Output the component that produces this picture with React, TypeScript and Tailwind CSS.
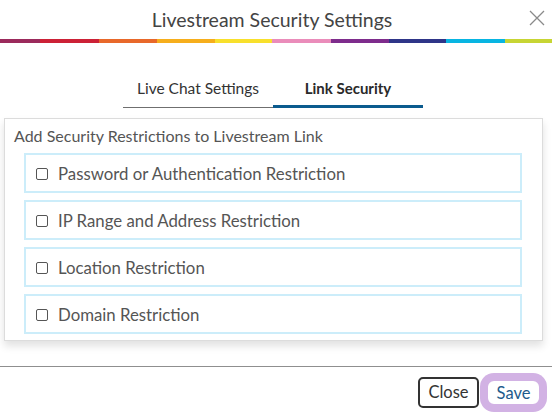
import React from "react";

const segs: [string, number][] = [
  ["#9b2a5c", 40],
  ["#cc2136", 59],
  ["#e8682a", 58],
  ["#f6ae1c", 58],
  ["#f8e02c", 57],
  ["#ea8cba", 59],
  ["#7e2c8c", 58],
  ["#2e3588", 57],
  ["#08b5e2", 59],
  ["#c7d534", 47],
];

const rows = [
  "Password or Authentication Restriction",
  "IP Range and Address Restriction",
  "Location Restriction",
  "Domain Restriction",
];

export default function App() {
  return (
    <div className="w-[552px] h-[412px] bg-white flex flex-col overflow-hidden" style={{ fontFamily: "Lato, 'Noto Sans', sans-serif" }}>
      <div className="relative h-[39px] flex items-center justify-center">
        <div className="text-[19.5px] text-[#444] leading-none pr-[8px]">Livestream Security Settings</div>
        <svg className="absolute left-[529px] top-[10px]" width="16" height="16" viewBox="0 0 16 16">
          <path d="M1 1 L15 15 M15 1 L1 15" stroke="#8a8a8a" strokeWidth="1.3" fill="none" />
        </svg>
      </div>
      <div className="flex h-[4px]">
        {segs.map(([c, w], i) => (
          <div key={i} className="h-full" style={{ background: c, width: w }} />
        ))}
      </div>
      <div className="flex mt-[27px] pl-[123px]">
        <div className="w-[150px] h-[38px] flex items-center justify-center border-b border-[#6f6f6f] text-[15.5px] text-[#333]">
          Live Chat Settings
        </div>
        <div className="w-[150px] h-[38px] flex items-center justify-center border-b-[3px] border-[#0b5b8e] pt-[2px] text-[15px] font-bold text-[#2a2a2a]">
          Link Security
        </div>
      </div>
      <div className="mt-[10px] ml-[4px] mr-[9px] border border-[#dcdcdc] bg-white shadow-[0_5px_8px_rgba(0,0,0,0.12)] pt-[7px] pb-[6px]">
        <div className="pl-[9px] text-[16px] leading-[20px] text-[#555]">Add Security Restrictions to Livestream Link</div>
        <div className="mt-[7px] ml-[19px] mr-[20px] flex flex-col gap-[7px]">
          {rows.map((r) => (
            <div key={r} className="h-[40px] border-2 border-[#ccedfa] flex items-center pl-[10px] pt-[2px]">
              <span className="w-[12px] h-[12px] border border-[#555] rounded-[2px] bg-white" />
              <span className="ml-[10px] text-[16.8px] text-[#555]">{r}</span>
            </div>
          ))}
        </div>
      </div>
      <div className="mt-[25px] border-t border-[#8f8f8f] flex justify-end pt-[10px] pr-[9px] gap-[5px]">
        <button className="w-[61px] h-[31px] border-2 border-[#333] rounded-[5px] text-[16.5px] text-[#333] bg-white">
          Close
        </button>
        <button className="w-[59px] h-[31px] border-[4px] border-[#d2b2e4] ring-4 ring-[#d2b2e4] rounded-[10px] text-[16.5px] text-[#1d5b8c] bg-white">
          Save
        </button>
      </div>
    </div>
  );
}
